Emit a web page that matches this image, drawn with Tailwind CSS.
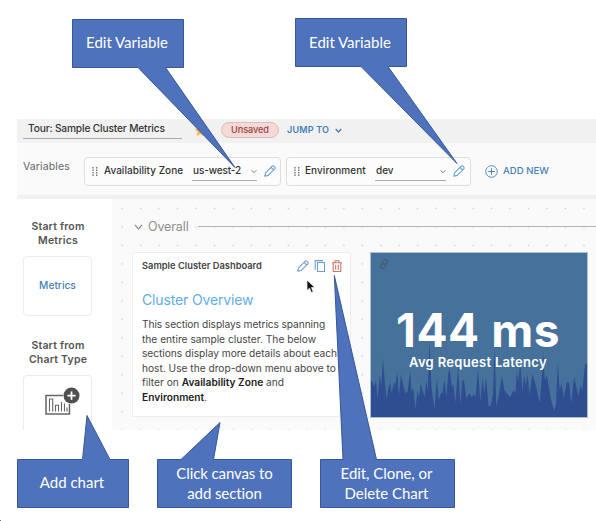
<!DOCTYPE html>
<html lang="en">
<head>
<meta charset="utf-8">
<title>Sample Cluster Metrics</title>
<script src="https://cdn.jsdelivr.net/npm/@tailwindcss/browser@4"></script>
</head>
<body class="relative h-[521px] w-[596px] overflow-hidden bg-white font-['Inter',sans-serif] text-[10px] text-[#333]">
<svg class="hidden">
  <symbol id="pencil" viewBox="0 0 12 12"><path d="M.8 11.200l.8-3.400L8.200 1.200a1.200 1.200 0 0 1 1.700 0l.9.9a1.200 1.200 0 0 1 0 1.700L4.200 10.400zM7 2.400l2.600 2.600" fill="none" stroke="currentColor" stroke-width="1.100" stroke-linejoin="round"/></symbol>
  <symbol id="chev" viewBox="0 0 10 6"><path d="M1 1l4 4 4-4" fill="none" stroke="currentColor" stroke-width="1.600"/></symbol>
  <symbol id="grip" viewBox="0 0 6 9"><path d="M.3 0h1.400v1.400H.3zM4 0h1.400v1.400H4zM.3 2.500h1.400v1.400H.3zM4 2.500h1.400v1.400H4zM.3 5h1.400v1.400H.3zM4 5h1.400v1.400H4zM.3 7.500h1.400v1.400H.3zM4 7.500h1.400v1.400H4z" fill="#777"/></symbol>
</svg>

<main class="ml-[17px] mt-[119px] h-[311px] w-[579px] overflow-hidden bg-[#fafafa]">
  <header class="flex h-6 items-start bg-[#f1f1f1] pl-1.5">
    <div class="h-[20px] w-[159px] whitespace-nowrap border-b border-[#aaa] pl-[5px] text-[10.200px] font-medium leading-[19px] tracking-[-0.160px] text-[#333]">Tour: Sample Cluster Metrics</div>
    <svg class="ml-[12px] mt-[5px] size-[13px]" viewBox="0 0 24 24" fill="#f5b942"><path d="M12 1l3.300 7.200 7.700.9-5.700 5.300 1.500 7.800L12 18.400l-6.800 3.800 1.500-7.800L1 9.100l7.700-.9z"/></svg>
    <div class="ml-[14px] mt-[3px] flex h-4 w-[58px] items-center justify-center rounded-full border border-[#e5b9b5] bg-[#f1dad8] text-[9.200px] font-medium tracking-[-0.100px] text-[#a04138]">Unsaved</div>
    <div class="ml-2 mt-[4px] flex items-center gap-[6px] whitespace-nowrap text-[9px] font-semibold leading-[14px] tracking-[0.200px] text-[#4780b4]">JUMP TO<svg class="h-[5px] w-[7px]" viewBox="0 0 10 6"><path d="M1 1l4 4 4-4" fill="none" stroke="currentColor" stroke-width="2"/></svg></div>
  </header>

  <section class="flex h-[56px] items-start border-b-4 border-[#f1f1f1] pl-1.5 pt-3.5 whitespace-nowrap">
    <div class="w-[61px] pt-[2px] text-[10.500px] leading-4 tracking-[0.130px] text-[#666]">Variables</div>
    <div class="flex h-[29px] w-[197px] items-center rounded-sm border border-[#dedede] bg-[#fcfcfc] pl-[7px] font-medium">
      <svg class="h-[9px] w-[6px]"><use href="#grip"/></svg>
      <div class="-mt-[2px] ml-[6px] w-[88px] tracking-[0.030px]">Availability Zone</div>
      <div class="-mt-[1px] flex h-[20px] w-[65px] items-center justify-between border-b border-[#aaa] pl-px tracking-[-0.120px]">us-west-2<svg class="mt-[2px] h-[5px] w-[6px] text-[#777]"><use href="#chev"/></svg></div>
      <svg class="-mt-[1px] ml-[7px] size-3 text-[#6d9fd0]"><use href="#pencil"/></svg>
    </div>
    <div class="ml-[5px] flex h-[29px] w-[185px] items-center rounded-sm border border-[#dedede] bg-[#fcfcfc] pl-[7px] font-medium">
      <svg class="h-[9px] w-[6px]"><use href="#grip"/></svg>
      <div class="-mt-[2px] ml-[5px] w-[70px] tracking-[0.060px]">Environment</div>
      <div class="-mt-[1px] flex h-[20px] w-[71px] items-center justify-between border-b border-[#aaa] pl-px">dev<svg class="mt-[2px] h-[5px] w-[6px] text-[#777]"><use href="#chev"/></svg></div>
      <svg class="-mt-[1px] ml-[7px] size-3 text-[#6d9fd0]"><use href="#pencil"/></svg>
    </div>
    <div class="ml-[14px] flex h-[28px] items-center gap-[5px] text-[9.600px] font-medium text-[#4780b4]">
      <svg class="size-[13px]" viewBox="0 0 13 13" fill="none" stroke="currentColor"><circle cx="6.500" cy="6.500" r="5.800" stroke-width=".9"/><path d="M6.500 3.300v6.400M3.300 6.500h6.400" stroke-width="1"/></svg>ADD NEW
    </div>
  </section>

  <div class="flex h-[231px]">
    <aside class="flex w-[95px] shrink-0 flex-col bg-white pl-1.5 pt-[21px]">
      <h3 class="w-[70px] text-center text-[10.500px] font-semibold leading-[14px] tracking-[0.200px] text-[#555]">Start from Metrics</h3>
      <div class="mt-[8px] flex h-[60px] w-[69px] shrink-0 items-center justify-center rounded border border-[#ececec] text-[10.200px] font-medium text-[#4780b4]">Metrics</div>
      <h3 class="mt-[23px] w-[70px] text-center text-[10.500px] font-semibold leading-[14px] tracking-[0.200px] text-[#555]">Start from<br>Chart Type</h3>
      <div class="mt-[8px] h-[64px] w-[69px] shrink-0 rounded border border-[#ececec] pl-[21px] pt-[11px]">
        <svg class="h-[30px] w-[36px]" viewBox="0 0 36 30" fill="none"><path d="M1 8.500h23.500v18.500H1z" stroke="#666" stroke-width="1.500"/><path d="M4.500 24.500V12h3.200v12.500M10.500 24.500v-6.200h3v6.200M16.500 24.500V15M19.500 24.500v-8M22 24.500v-4" stroke="#666" stroke-width="1.100"/><circle cx="26.500" cy="8.600" r="8.600" fill="#fff"/><circle cx="26.500" cy="8.600" r="8" fill="#505050"/><path d="M26.500 4.500v8.200M22.400 8.600h8.200" stroke="#fff" stroke-width="1.800"/></svg>
      </div>
    </aside>

    <section class="relative w-[484px] overflow-hidden">
      <svg class="absolute inset-0 h-[231px] w-[484px]"><defs><pattern id="dots" x="0.950" y="0.250" width="18.470" height="18.470" patternUnits="userSpaceOnUse"><circle cx="9.235" cy="9.235" r=".9" fill="#d4d4d4"/></pattern></defs><rect width="484" height="231" fill="url(#dots)"/></svg>
      <div class="relative">
        <div class="flex h-[53px] items-center pl-[22px] pt-[2px] text-[12.500px] tracking-[-0.120px] text-[#909090]">
          <svg class="mr-[5px] h-[6px] w-[9px]" viewBox="0 0 10 6"><path d="M1 .7l4 4.300 4-4.300" fill="none" stroke="#888" stroke-width="1.300"/></svg><span class="pt-px">Overall</span><div class="ml-[9px] h-px grow bg-[#b5b5b5]"></div>
        </div>
        <div class="flex gap-[19px] pl-[20px]">
          <article class="h-[165px] w-[219px] rounded-[2px] border border-[#ededed] bg-white pl-[9px] pt-[5px]">
            <div class="flex h-4 justify-between pr-[7px]">
              <h4 class="whitespace-nowrap text-[9.300px] font-semibold leading-[15px] tracking-[0.010px] text-[#444]">Sample Cluster Dashboard</h4>
              <div class="flex gap-[5px] pt-[2px]">
                <svg class="size-3 text-[#6d9fd0]"><use href="#pencil"/></svg>
                <svg class="size-3" viewBox="0 0 12 12" fill="none" stroke="#6d9fd0" stroke-width="1.100"><path d="M3.500 2.500h7v9h-7zM1.200 9.700V.6H9"/></svg>
                <svg class="size-3" viewBox="0 0 12 12" fill="none" stroke="#cc786d" stroke-width="1.100"><path d="M1 2.800h10M4 2.600V.8h4v1.800M2.200 3v8.500h7.600V3M4.700 4.800v5M7.300 4.800v5"/></svg>
              </div>
            </div>
            <h2 class="mt-[17px] text-[14px] leading-[18px] tracking-[-0.150px] text-[#5fade8]">Cluster Overview</h2>
            <div class="mt-[8px] whitespace-nowrap text-[10.200px] leading-[14.600px] text-[#444]">
              <p class="tracking-[-0.090px]">This section displays metrics spanning</p>
              <p>the entire sample cluster. The below</p>
              <p class="tracking-[-0.030px]">sections display more details about each</p>
              <p class="tracking-[-0.010px]">host. Use the drop-down menu above to</p>
              <p>filter on <b class="font-semibold text-[#222]">Availability Zone</b> and</p>
              <p><b class="font-semibold text-[#222]">Environment</b>.</p>
            </div>
          </article>
          <article class="relative h-[166px] w-[218px] border border-[#a9c0d6] bg-[#46719b]">
            <svg class="absolute inset-0 h-full w-full" viewBox="31 39 650 492" preserveAspectRatio="none"><path fill="#2e4e91" d="M31 531V420L36 428 40 440 46 422 51 478 57 405 62 440 67 356 72 420 78 478 84 440 89 428 93 460 100 430 105 430 110 395 115 470 121 402 127 430 134 460 141 455 149 393 153 455 158 445 165 508 171 450 175 475 181 430 187 455 193 470 197 420 202 450 207 300 213 440 222 508 229 415 235 480 241 460 246 458 252 418 258 470 264 400 268 385 274 440 279 435 285 490 293 380 300 495 306 420 311 422 318 475 327 460 334 472 341 462 346 470 353 390 360 485 367 415 372 460 377 410 385 500 392 495 398 460 403 320 408 500 416 465 425 408 432 450 449 472 460 450 466 460 470 390 474 425 480 370 487 455 492 405 497 435 502 402 508 465 517 402 528 440 539 490 545 410 549 335 554 420 560 405 566 440 575 490 583 512 588 490 593 370 599 450 605 430 611 475 620 425 627 430 634 490 642 410 650 445 655 470 661 435 667 450 675 372 681 372V531z"/></svg>
            <svg class="absolute left-[8px] top-[6px] size-[10px] -rotate-12" viewBox="0 0 24 24" fill="none" stroke="#4c5b6b" stroke-width="3.200" stroke-linecap="round"><path d="M10 13a5 5 0 0 0 7.500.5l3-3a5 5 0 0 0-7-7l-1.700 1.700M14 11a5 5 0 0 0-7.500-.5l-3 3a5 5 0 0 0 7 7l1.700-1.700"/></svg>
            <div class="relative pr-[2px] pt-[54px] text-center font-bold text-white">
              <div class="text-[46px] leading-[46px] tracking-[0.550px]">144 ms</div>
              <div class="mt-[1px] text-[13px] font-semibold leading-[16px] tracking-[0.310px]">Avg Request Latency</div>
            </div>
          </article>
        </div>
      </div>
    </section>
  </div>
</main>

<svg class="absolute inset-0" width="596" height="521" fill="#4e72bb" stroke="#38579a" stroke-width="1">
  <path d="M72.500 19.500h111v48H165.500L235 167.500 138 67.500H72.500z"/>
  <path d="M295.500 18.500h111v48H388L457 163.500 361 66.500H295.500z"/>
  <path d="M17.500 459.500H82.500L87 415.500 110 459.500H128.500v48h-111z"/>
  <path d="M157.500 459.500H181L220 422.500 213.500 459.500H291.500v48h-134z"/>
  <path d="M320.500 459.500H343L334.300 275.500 376.500 459.500H454.500v48h-134z"/>
</svg>
<svg class="absolute left-[306px] top-[279px] h-[15px] w-[10px]" viewBox="0 0 10 15"><path d="M1 1v10.500l2.500-2.300 1.900 4.300 1.800-.8-1.800-4.200H8.800z" fill="#111" stroke="#fff" stroke-width=".7"/></svg>

<div class="absolute left-[71px] top-[18px] flex h-[49px] w-[112px] items-center justify-center font-['Lato',sans-serif] text-[15px] text-white">Edit Variable</div>
<div class="absolute left-[294px] top-[18px] flex h-[49px] w-[112px] items-center justify-center font-['Lato',sans-serif] text-[15px] text-white">Edit Variable</div>
<div class="absolute left-[16px] top-[458px] flex h-[49px] w-[112px] items-center justify-center font-['Lato',sans-serif] text-[15px] text-white">Add chart</div>
<div class="absolute left-[157px] top-[458px] flex h-[49px] w-[135px] items-center justify-center text-center font-['Lato',sans-serif] text-[15px] leading-5 tracking-[-0.100px] text-white">Click canvas to<br>add section</div>
<div class="absolute left-[319px] top-[458px] flex h-[49px] w-[135px] items-center justify-center text-center font-['Lato',sans-serif] text-[15px] leading-5 tracking-[-0.050px] text-white">Edit, Clone, or<br>Delete Chart</div>
<div class="absolute bottom-0 left-0 size-px bg-[#777]"></div>
</body>
</html>
